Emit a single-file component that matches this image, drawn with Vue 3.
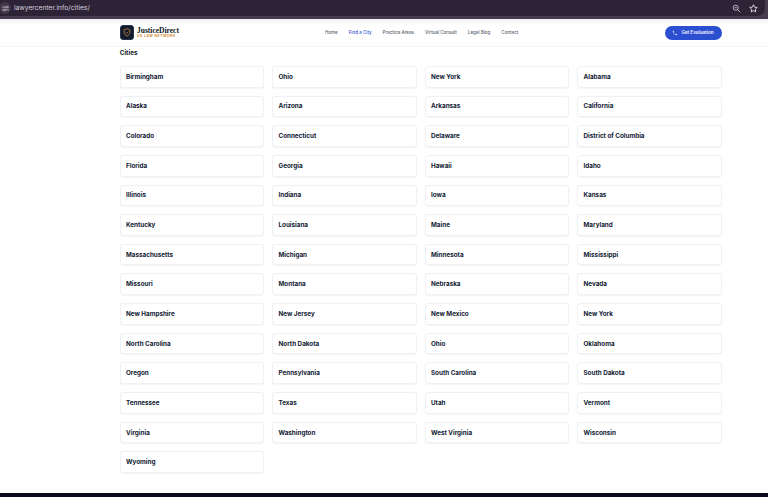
<script setup>
const nav = [
  { label: 'Home' },
  { label: 'Find a City', active: true },
  { label: 'Practice Areas' },
  { label: 'Virtual Consult' },
  { label: 'Legal Blog' },
  { label: 'Contact' },
]
const cities = ['Birmingham','Ohio','New York','Alabama','Alaska','Arizona','Arkansas','California','Colorado','Connecticut','Delaware','District of Columbia','Florida','Georgia','Hawaii','Idaho','Illinois','Indiana','Iowa','Kansas','Kentucky','Louisiana','Maine','Maryland','Massachusetts','Michigan','Minnesota','Mississippi','Missouri','Montana','Nebraska','Nevada','New Hampshire','New Jersey','New Mexico','New York','North Carolina','North Dakota','Ohio','Oklahoma','Oregon','Pennsylvania','South Carolina','South Dakota','Tennessee','Texas','Utah','Vermont','Virginia','Washington','West Virginia','Wisconsin','Wyoming']
</script>

<template>
  <div class="page">
    <div class="browser">
      <div class="omnibox">
        <div class="site-info">
          <svg width="7" height="7" viewBox="0 0 10 10" fill="none" stroke="#c9c4d0" stroke-width="1.100">
            <path d="M0 3h5M8 3h2M0 7h2M5 7h5" />
            <circle cx="6.500" cy="3" r="1.400" />
            <circle cx="3.500" cy="7" r="1.400" />
          </svg>
        </div>
        <span class="url">lawyercenter.info/cities/</span>
        <div class="browser-icons">
          <svg width="9" height="9" viewBox="0 0 12 12" fill="none" stroke="#bdb8c5" stroke-width="1.300">
            <circle cx="5" cy="5" r="3.400" />
            <path d="M7.500 7.500L11 11M3.500 5h3" />
          </svg>
          <svg width="9" height="9" viewBox="0 0 12 12" fill="none" stroke="#dcd9e0" stroke-width="1.300">
            <path d="M6 1l1.500 3.200 3.500.4-2.600 2.400.7 3.500L6 8.800l-3.100 1.700.7-3.500L1 4.600l3.500-.4z" />
          </svg>
        </div>
      </div>
    </div>

    <header class="header">
      <div class="header-inner">
        <div class="brand">
          <div class="logo">
            <svg width="8" height="9" viewBox="0 0 12 14" fill="none" stroke="#b9822f" stroke-width="1.300">
              <path d="M6 1l4.500 1.700v4c0 2.800-1.900 4.700-4.500 5.800-2.600-1.100-4.500-3-4.500-5.800v-4z" />
              <path d="M4 7l1.500 1.500L8 5.700" />
            </svg>
          </div>
          <div class="brand-text">
            <span class="brand-name">JusticeDirect</span>
            <span class="brand-sub">US LAW NETWORK</span>
          </div>
        </div>
        <nav class="nav">
          <a v-for="item in nav" :key="item.label" class="nav-link" :class="{ active: item.active }">{{ item.label }}</a>
        </nav>
        <button class="cta">
          <svg width="6" height="6" viewBox="0 0 24 24" fill="#b9c8f5">
            <path d="M6.600 10.800c1.400 2.800 3.800 5.100 6.600 6.600l2.200-2.200c.3-.3.700-.4 1-.2 1.100.4 2.300.6 3.600.6.600 0 1 .4 1 1V20c0 .6-.4 1-1 1C10.600 21 3 13.400 3 4c0-.6.400-1 1-1h3.500c.6 0 1 .4 1 1 0 1.300.2 2.500.6 3.600.1.300 0 .7-.2 1z" />
          </svg>
          Get Evaluation
        </button>
      </div>
    </header>

    <main class="main">
      <h1 class="title">Cities</h1>
      <div class="grid">
        <a v-for="(city, i) in cities" :key="i" class="card">{{ city }}</a>
      </div>
    </main>

    <div class="bottom"></div>
  </div>
</template>

<style scoped>
.page {
  width: 768px;
  height: 497px;
  display: flex;
  flex-direction: column;
  background: #fff;
  overflow: hidden;
  font-family: Inter, "Liberation Sans", sans-serif;
}
.browser {
  height: 19px;
  flex: none;
  background: #453c4e;
}
.omnibox {
  width: 765px;
  height: 16px;
  display: flex;
  align-items: center;
  background: #2d2337;
  border-radius: 0 0 8px 0;
}
.site-info {
  width: 12px;
  height: 12px;
  border-radius: 50%;
  background: #40374a;
  display: flex;
  align-items: center;
  justify-content: center;
  margin-left: -1px;
  margin-right: 3px;
  flex: none;
}
.url {
  font-size: 6.700px;
  color: #d6d2dc;
}
.browser-icons {
  margin-left: auto;
  margin-right: 7px;
  display: flex;
  align-items: center;
  gap: 8px;
}
.header {
  height: 28px;
  flex: none;
  border-bottom: 1px solid #f5f6f8;
  box-sizing: border-box;
  background: linear-gradient(#eeeeef, #fff 6px);
}
.header-inner {
  width: 602px;
  height: 100%;
  margin-left: 120px;
  display: flex;
  align-items: center;
}
.brand {
  display: flex;
  align-items: center;
  gap: 3px;
  width: 205px;
}
.logo {
  width: 14px;
  height: 15px;
  box-sizing: border-box;
  border: 1px solid #2a3246;
  border-radius: 3px;
  background: #111b30;
  display: flex;
  align-items: center;
  justify-content: center;
}
.brand-text {
  display: flex;
  flex-direction: column;
  line-height: 1;
}
.brand-name {
  font-family: "Liberation Serif", serif;
  font-size: 7.500px;
  font-weight: 700;
  color: #0d1320;
  height: 6px;
  line-height: 6px;
}
.brand-sub {
  font-size: 3.400px;
  font-weight: 700;
  letter-spacing: 0.500px;
  color: #d08a2e;
  line-height: 4px;
}
.nav {
  display: flex;
  gap: 11px;
}
.nav-link {
  font-size: 4.500px;
  font-weight: 500;
  color: #5a6270;
}
.nav-link.active {
  color: #2f55d4;
}
.cta {
  margin-left: auto;
  width: 57px;
  height: 14px;
  border: 0;
  padding: 0 1px 0 0;
  border-radius: 7px;
  background: #2b4fd0;
  color: #f4f6ff;
  font-family: inherit;
  font-size: 4.600px;
  font-weight: 600;
  display: flex;
  align-items: center;
  justify-content: center;
  gap: 3px;
}
.main {
  flex: 1;
  width: 602px;
  margin-left: 119.750px;
  padding-top: 2px;
  box-sizing: border-box;
}
.title {
  margin: 0 0 8px;
  height: 9px;
  line-height: 9px;
  font-size: 6.300px;
  font-weight: 700;
  color: #111827;
}
.grid {
  display: grid;
  grid-template-columns: repeat(4, 1fr);
  grid-auto-rows: 21.650px;
  gap: 8px;
}
.card {
  display: flex;
  align-items: center;
  padding-left: 5.250px;
  box-sizing: border-box;
  border: 1px solid #f0f1f5;
  border-radius: 3px;
  background: #fff;
  box-shadow: 0 0.500px 1px rgba(17, 24, 39, 0.04);
  font-size: 6.300px;
  font-weight: 700;
  color: #111a33;
}
.bottom {
  height: 4px;
  flex: none;
  background: #0b0b1e;
}
</style>
